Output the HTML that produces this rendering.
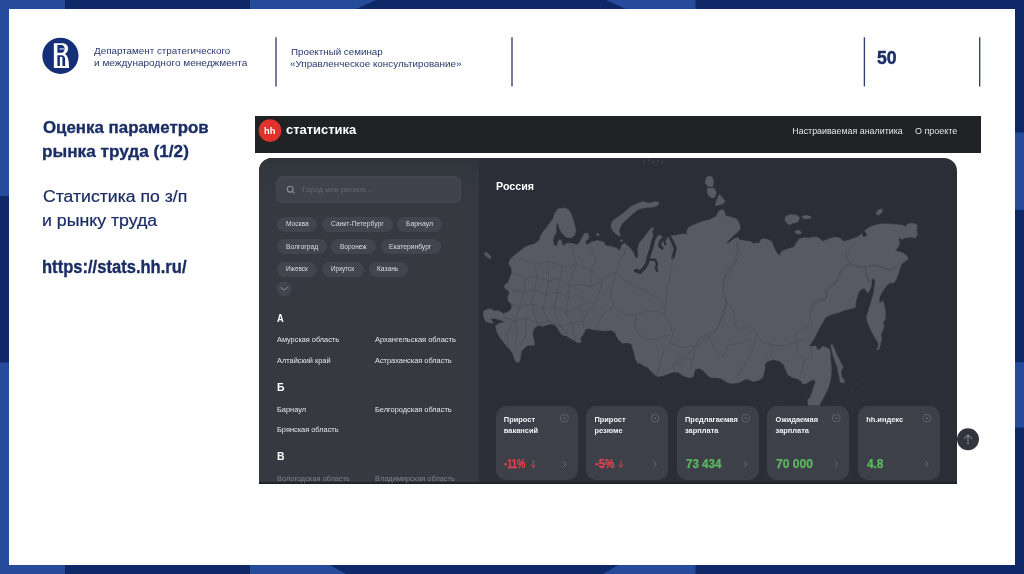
<!DOCTYPE html>
<html lang="ru">
<head>
<meta charset="utf-8">
<title>Оценка параметров рынка труда</title>
<style>
html,body{margin:0;padding:0;}
body{width:1024px;height:574px;position:relative;overflow:hidden;background:#0f2968;font-family:"Liberation Sans",sans-serif;}
#bg,#gfx{position:absolute;left:0;top:0;width:1024px;height:574px;}
#sheet{position:absolute;left:9px;top:8.5px;width:1006px;height:556.5px;background:#ffffff;}
#nav{position:absolute;left:254.7px;top:116px;width:726px;height:36.6px;background:#202226;}
#panel{position:absolute;left:258.5px;top:158.2px;width:698.3px;height:325.4px;background:#2b2e36;border-radius:13px 13px 0 0;overflow:hidden;}
#side{position:absolute;left:0;top:0;width:220.4px;height:100%;background:linear-gradient(180deg,#30343b 0px,#33373e 18px,#363940 50px,#363940 100%);}
#search{position:absolute;left:276.4px;top:175.8px;width:184.2px;height:27.2px;border-radius:7px;background:#40434b;box-shadow:inset 0 0 0 0.7px #494c54;}
.chip{position:absolute;height:15px;border-radius:7.5px;background:#42454d;}
.card{position:absolute;top:405.5px;width:82px;height:74.5px;border-radius:10px;background:#3d4049;}
.t{position:absolute;white-space:nowrap;line-height:1;transform-origin:0 50%;letter-spacing:0;}
</style>
</head>
<body>
<svg id="bg" viewBox="0 0 1024 574">
  <rect width="1024" height="574" fill="#0f2968"/>
  <g fill="#274b9b">
    <rect x="0" y="0" width="65" height="196"/>
    <rect x="0" y="362.5" width="65" height="212"/>
    <polygon points="250,0 376,0 356,9 250,9"/>
    <polygon points="606,0 695.5,0 695.5,9 626,9"/>
    <polygon points="250,564 328,564 346,574 250,574"/>
    <polygon points="620,564 695.5,564 695.5,574 603,574"/>
    <rect x="1000" y="132.6" width="24" height="77.2"/>
    <rect x="1000" y="362.2" width="24" height="65.3"/>
  </g>
</svg>
<div id="sheet"></div>
<div id="nav"></div>
<div id="panel"><div id="side"></div><div style="position:absolute;left:0;bottom:0;width:100%;height:1.3px;background:#22242a"></div></div>
<div id="search"></div>
<div class="chip" style="left:276.9px;top:216.8px;width:40.4px"></div><div class="chip" style="left:322.0px;top:216.8px;width:70.7px"></div><div class="chip" style="left:397.0px;top:216.8px;width:44.5px"></div><div class="chip" style="left:276.9px;top:239.3px;width:49.7px"></div><div class="chip" style="left:331.0px;top:239.3px;width:44.6px"></div><div class="chip" style="left:380.6px;top:239.3px;width:60.4px"></div><div class="chip" style="left:276.9px;top:261.6px;width:40.4px"></div><div class="chip" style="left:322.0px;top:261.6px;width:41.6px"></div><div class="chip" style="left:368.6px;top:261.6px;width:39.2px"></div>
<div class="card" style="left:495.5px"></div><div class="card" style="left:586.1px"></div><div class="card" style="left:676.7px"></div><div class="card" style="left:767.3px"></div><div class="card" style="left:857.9px"></div>
<svg id="gfx" viewBox="0 0 1024 574">
  <defs>
    <clipPath id="landclip"><path d="M511.9,307.7 L511.2,304.0 L508.7,301.4 L507.5,297.7 L509.4,293.9 L508.7,290.8 L505.0,288.3 L504.3,285.8 L508.1,282.6 L510.0,277.6 L511.9,272.6 L511.2,267.6 L508.7,263.8 L510.6,258.8 L513.1,256.5 L519.4,251.5 L524.4,247.7 L528.2,245.8 L534.5,244.0 L539.5,240.2 L540.7,235.2 L544.5,230.2 L547.6,226.4 L550.8,221.4 L553.3,218.2 L555.2,212.6 L558.3,208.8 L564.6,207.9 L569.0,210.1 L571.5,215.1 L574.0,222.6 L575.9,230.2 L574.6,235.2 L570.8,237.9 L565.8,237.1 L562.1,233.3 L559.6,228.9 L558.1,223.2 L556.8,222.9 L556.0,227.6 L556.3,232.7 L554.0,236.2 L552.8,240.2 L554.0,245.5 L557.0,246.1 L557.9,241.7 L559.6,239.7 L561.4,240.4 L562.3,244.8 L564.6,245.7 L565.8,243.7 L569.6,243.2 L573.4,243.7 L577.1,245.0 L579.1,243.5 L580.9,240.2 L582.8,236.4 L584.6,233.3 L587.8,233.3 L589.0,237.1 L587.4,239.7 L585.5,240.9 L585.5,244.2 L588.0,244.5 L590.9,242.2 L597.2,240.6 L603.8,242.0 L605.7,245.7 L611.3,246.4 L617.0,248.2 L618.2,250.8 L620.7,248.9 L622.0,245.1 L624.5,243.2 L627.6,245.7 L630.8,248.9 L633.3,252.6 L635.2,257.7 L637.7,258.3 L638.3,253.9 L637.7,248.9 L639.6,242.6 L644.0,237.6 L647.7,232.6 L650.2,229.4 L651.5,227.5 L654.0,228.8 L654.7,231.9 L655.2,235.7 L656.8,238.2 L658.4,235.1 L662.1,236.6 L665.3,238.2 L668.4,237.6 L671.6,235.7 L677.8,235.1 L684.1,233.8 L687.2,235.1 L686.6,231.3 L689.1,226.9 L696.6,223.8 L702.9,221.3 L709.2,220.0 L716.3,216.3 L718.8,211.3 L722.6,209.4 L725.1,212.5 L725.1,215.7 L730.1,216.9 L736.4,218.8 L739.5,223.8 L740.2,228.2 L738.3,231.4 L735.1,233.9 L731.4,237.6 L725.1,243.9 L728.9,242.7 L733.9,238.9 L737.6,237.6 L740.2,240.2 L743.9,240.8 L750.2,241.4 L752.7,243.3 L759.0,243.3 L761.5,238.9 L766.5,238.9 L771.5,241.4 L774.0,247.7 L776.5,252.7 L779.7,255.8 L781.6,251.4 L787.8,248.9 L794.1,247.1 L796.6,242.7 L799.1,238.9 L804.1,237.6 L809.2,238.3 L812.9,237.0 L817.9,237.6 L823.0,241.4 L828.8,238.9 L835.1,237.1 L840.1,238.3 L843.9,241.4 L848.9,240.2 L853.9,238.3 L858.9,236.4 L861.4,233.3 L862.7,236.4 L865.8,237.1 L867.1,234.5 L864.6,230.8 L869.0,227.6 L875.2,225.1 L881.5,223.9 L887.8,223.9 L895.3,224.5 L901.6,225.1 L905.4,226.4 L907.9,223.9 L912.9,223.2 L917.3,225.1 L916.6,230.2 L917.3,235.2 L915.4,237.7 L910.4,237.1 L905.4,237.7 L901.6,239.6 L899.7,237.1 L898.5,239.6 L899.7,242.7 L897.8,247.7 L895.3,250.2 L897.8,251.5 L902.8,252.7 L907.2,256.5 L907.2,260.3 L907.9,257.5 L905.4,261.3 L901.6,263.8 L899.7,268.8 L897.8,275.1 L895.9,280.1 L893.4,283.2 L890.3,282.6 L887.2,285.1 L884.0,288.9 L881.5,292.7 L879.6,296.4 L879.0,301.4 L880.9,303.3 L882.8,300.2 L884.0,305.2 L885.3,310.2 L885.3,315.2 L885.4,318.8 L882.9,322.5 L884.1,326.3 L882.9,330.1 L881.0,333.8 L881.6,338.9 L880.4,343.9 L879.1,348.9 L876.6,350.2 L877.9,347.6 L878.5,343.9 L876.6,340.1 L873.5,335.1 L870.3,328.8 L867.8,322.5 L866.6,317.5 L867.1,315.2 L869.0,309.0 L870.9,302.7 L872.7,296.4 L874.0,291.4 L874.6,286.4 L875.2,281.4 L874.0,278.2 L872.1,278.6 L871.5,281.4 L871.5,285.1 L870.2,288.9 L868.3,292.7 L866.5,291.4 L865.2,288.9 L862.7,288.3 L858.9,291.4 L857.1,296.4 L855.8,301.4 L855.2,305.2 L856.4,306.5 L852.7,308.3 L847.6,309.6 L843.9,310.2 L840.1,312.1 L830.2,315.0 L825.2,317.5 L822.7,322.5 L818.9,328.8 L816.4,333.8 L813.9,338.9 L811.4,342.6 L809.5,346.4 L812.6,346.4 L815.8,345.8 L817.6,350.2 L820.2,348.9 L822.7,346.4 L826.4,347.6 L829.6,349.5 L830.2,352.7 L830.3,357.6 L831.0,363.8 L831.3,370.1 L831.0,376.4 L829.7,382.7 L827.8,388.9 L825.3,394.0 L822.8,399.0 L820.3,402.7 L819.0,407.8 L808.4,407.8 L807.8,399.6 L810.3,397.7 L812.1,392.7 L813.4,387.7 L815.3,382.7 L814.7,379.5 L811.5,380.2 L806.5,383.3 L802.7,383.9 L801.5,381.4 L797.7,378.9 L792.7,377.6 L788.3,375.1 L785.8,370.1 L783.9,365.1 L780.2,361.3 L773.9,359.4 L767.6,361.3 L764.5,364.5 L765.1,367.6 L763.8,372.6 L762.6,377.6 L758.8,380.2 L752.5,381.4 L747.9,379.0 L744.2,379.6 L741.7,381.5 L737.9,382.7 L732.9,383.4 L727.9,382.7 L724.1,380.2 L720.3,378.3 L716.6,377.7 L711.6,377.7 L707.8,375.8 L705.3,372.7 L702.1,369.6 L698.4,368.3 L695.2,369.6 L694.0,372.7 L693.4,376.5 L690.2,377.7 L685.2,376.5 L681.4,374.6 L677.7,372.1 L672.7,372.1 L667.6,374.0 L662.6,375.8 L657.6,376.5 L653.8,374.0 L650.1,370.2 L647.6,367.1 L643.8,365.8 L640.0,363.3 L637.5,362.7 L635.6,358.9 L633.8,351.4 L631.9,345.1 L631.6,344.0 L627.9,342.7 L622.8,343.3 L619.1,340.2 L616.6,336.4 L615.3,332.7 L611.6,330.2 L605.3,330.8 L599.0,330.2 L592.7,329.5 L587.7,328.3 L585.2,330.2 L584.0,333.3 L581.4,336.4 L580.2,339.6 L581.4,342.1 L577.7,342.7 L573.9,340.2 L570.2,338.3 L566.4,335.8 L562.6,335.2 L560.1,332.7 L557.6,328.3 L555.1,325.1 L551.3,323.9 L546.3,325.1 L542.5,326.4 L538.8,325.1 L535.0,327.6 L533.1,330.2 L532.5,335.2 L533.8,340.2 L534.4,345.2 L528.2,345.2 L524.4,347.7 L521.3,351.4 L520.7,356.5 L519.4,361.5 L516.9,362.7 L514.4,359.0 L513.1,354.0 L510.6,350.2 L506.9,346.4 L503.1,341.4 L499.3,336.4 L496.8,331.4 L495.6,326.3 L498.1,323.8 L503.1,322.6 L505.6,322.0 L500.6,320.1 L494.3,318.2 L490.5,318.8 L493.1,323.2 L489.3,322.6 L485.5,321.3 L483.6,316.3 L483.6,311.3 L486.8,309.4 L490.5,308.8 L494.3,311.3 L498.1,310.7 L501.8,312.5 L503.1,313.8 L506.9,312.5 L510.6,310.0 L511.9,307.5Z"/></clipPath>
    <clipPath id="mapclip"><rect x="479" y="158.2" width="478.8" height="247.3"/></clipPath>
  </defs>
  <!-- header rules -->
  <g stroke="#303e72" stroke-width="1.35">
    <line x1="276" y1="37.3" x2="276" y2="86.4"/>
    <line x1="512" y1="37.3" x2="512" y2="86.4"/>
    <line x1="864.4" y1="37.3" x2="864.4" y2="86.4"/>
    <line x1="979.7" y1="37.3" x2="979.7" y2="86.4"/>
  </g>
  <!-- HSE logo -->
  <circle cx="60.4" cy="55.8" r="18.1" fill="#152f78"/>
  <g id="hse">
    <path d="M53.85,43.3 L62.5,43.3 C66.2,43.3 68.0,45.6 68.0,48.4 C68.0,50.9 66.8,52.8 65.0,53.8 C67.2,55.2 68.3,58.5 68.7,62 L69.1,68 L53.85,68 Z" fill="#ffffff"/>
    <path d="M57.4,44.9 L61.3,44.9 C63.6,44.9 64.6,46.8 64.6,48.8 C64.6,50.9 63.6,52.75 61.3,52.75 L57.4,52.75 Z" fill="#152f78"/>
    <rect x="59.4" y="48.25" width="5.0" height="1.35" fill="#b7c6ef"/>
    <path d="M57.4,65.9 L57.4,55.3 L61.5,55.3 C64,55.3 65.1,57 65.1,59.2 L65.1,65.9 Z" fill="#152f78"/>
    <rect x="59.9" y="56.9" width="2.5" height="9.2" fill="#ffffff"/>
  </g>
  <!-- hh logo -->
  <circle cx="270" cy="130.6" r="11.3" fill="#e1312b"/>
  <!-- search icon -->
  <g fill="none" stroke="#8a8d95" stroke-width="1.1" stroke-linecap="round">
    <circle cx="290.2" cy="189.2" r="2.9"/>
    <line x1="292.4" y1="191.4" x2="294.2" y2="193.2"/>
  </g>
  <!-- more chips button -->
  <circle cx="284.2" cy="288.7" r="7.5" fill="#42454d"/>
  <path d="M280.8,287.5 L284.2,290.0 L287.6,287.3" fill="none" stroke="#858991" stroke-width="0.95" stroke-linecap="round" stroke-linejoin="round"/>
  <!-- map -->
  <g clip-path="url(#mapclip)">
<path d="M511.9,307.7 L511.2,304.0 L508.7,301.4 L507.5,297.7 L509.4,293.9 L508.7,290.8 L505.0,288.3 L504.3,285.8 L508.1,282.6 L510.0,277.6 L511.9,272.6 L511.2,267.6 L508.7,263.8 L510.6,258.8 L513.1,256.5 L519.4,251.5 L524.4,247.7 L528.2,245.8 L534.5,244.0 L539.5,240.2 L540.7,235.2 L544.5,230.2 L547.6,226.4 L550.8,221.4 L553.3,218.2 L555.2,212.6 L558.3,208.8 L564.6,207.9 L569.0,210.1 L571.5,215.1 L574.0,222.6 L575.9,230.2 L574.6,235.2 L570.8,237.9 L565.8,237.1 L562.1,233.3 L559.6,228.9 L558.1,223.2 L556.8,222.9 L556.0,227.6 L556.3,232.7 L554.0,236.2 L552.8,240.2 L554.0,245.5 L557.0,246.1 L557.9,241.7 L559.6,239.7 L561.4,240.4 L562.3,244.8 L564.6,245.7 L565.8,243.7 L569.6,243.2 L573.4,243.7 L577.1,245.0 L579.1,243.5 L580.9,240.2 L582.8,236.4 L584.6,233.3 L587.8,233.3 L589.0,237.1 L587.4,239.7 L585.5,240.9 L585.5,244.2 L588.0,244.5 L590.9,242.2 L597.2,240.6 L603.8,242.0 L605.7,245.7 L611.3,246.4 L617.0,248.2 L618.2,250.8 L620.7,248.9 L622.0,245.1 L624.5,243.2 L627.6,245.7 L630.8,248.9 L633.3,252.6 L635.2,257.7 L637.7,258.3 L638.3,253.9 L637.7,248.9 L639.6,242.6 L644.0,237.6 L647.7,232.6 L650.2,229.4 L651.5,227.5 L654.0,228.8 L654.7,231.9 L655.2,235.7 L656.8,238.2 L658.4,235.1 L662.1,236.6 L665.3,238.2 L668.4,237.6 L671.6,235.7 L677.8,235.1 L684.1,233.8 L687.2,235.1 L686.6,231.3 L689.1,226.9 L696.6,223.8 L702.9,221.3 L709.2,220.0 L716.3,216.3 L718.8,211.3 L722.6,209.4 L725.1,212.5 L725.1,215.7 L730.1,216.9 L736.4,218.8 L739.5,223.8 L740.2,228.2 L738.3,231.4 L735.1,233.9 L731.4,237.6 L725.1,243.9 L728.9,242.7 L733.9,238.9 L737.6,237.6 L740.2,240.2 L743.9,240.8 L750.2,241.4 L752.7,243.3 L759.0,243.3 L761.5,238.9 L766.5,238.9 L771.5,241.4 L774.0,247.7 L776.5,252.7 L779.7,255.8 L781.6,251.4 L787.8,248.9 L794.1,247.1 L796.6,242.7 L799.1,238.9 L804.1,237.6 L809.2,238.3 L812.9,237.0 L817.9,237.6 L823.0,241.4 L828.8,238.9 L835.1,237.1 L840.1,238.3 L843.9,241.4 L848.9,240.2 L853.9,238.3 L858.9,236.4 L861.4,233.3 L862.7,236.4 L865.8,237.1 L867.1,234.5 L864.6,230.8 L869.0,227.6 L875.2,225.1 L881.5,223.9 L887.8,223.9 L895.3,224.5 L901.6,225.1 L905.4,226.4 L907.9,223.9 L912.9,223.2 L917.3,225.1 L916.6,230.2 L917.3,235.2 L915.4,237.7 L910.4,237.1 L905.4,237.7 L901.6,239.6 L899.7,237.1 L898.5,239.6 L899.7,242.7 L897.8,247.7 L895.3,250.2 L897.8,251.5 L902.8,252.7 L907.2,256.5 L907.2,260.3 L907.9,257.5 L905.4,261.3 L901.6,263.8 L899.7,268.8 L897.8,275.1 L895.9,280.1 L893.4,283.2 L890.3,282.6 L887.2,285.1 L884.0,288.9 L881.5,292.7 L879.6,296.4 L879.0,301.4 L880.9,303.3 L882.8,300.2 L884.0,305.2 L885.3,310.2 L885.3,315.2 L885.4,318.8 L882.9,322.5 L884.1,326.3 L882.9,330.1 L881.0,333.8 L881.6,338.9 L880.4,343.9 L879.1,348.9 L876.6,350.2 L877.9,347.6 L878.5,343.9 L876.6,340.1 L873.5,335.1 L870.3,328.8 L867.8,322.5 L866.6,317.5 L867.1,315.2 L869.0,309.0 L870.9,302.7 L872.7,296.4 L874.0,291.4 L874.6,286.4 L875.2,281.4 L874.0,278.2 L872.1,278.6 L871.5,281.4 L871.5,285.1 L870.2,288.9 L868.3,292.7 L866.5,291.4 L865.2,288.9 L862.7,288.3 L858.9,291.4 L857.1,296.4 L855.8,301.4 L855.2,305.2 L856.4,306.5 L852.7,308.3 L847.6,309.6 L843.9,310.2 L840.1,312.1 L830.2,315.0 L825.2,317.5 L822.7,322.5 L818.9,328.8 L816.4,333.8 L813.9,338.9 L811.4,342.6 L809.5,346.4 L812.6,346.4 L815.8,345.8 L817.6,350.2 L820.2,348.9 L822.7,346.4 L826.4,347.6 L829.6,349.5 L830.2,352.7 L830.3,357.6 L831.0,363.8 L831.3,370.1 L831.0,376.4 L829.7,382.7 L827.8,388.9 L825.3,394.0 L822.8,399.0 L820.3,402.7 L819.0,407.8 L808.4,407.8 L807.8,399.6 L810.3,397.7 L812.1,392.7 L813.4,387.7 L815.3,382.7 L814.7,379.5 L811.5,380.2 L806.5,383.3 L802.7,383.9 L801.5,381.4 L797.7,378.9 L792.7,377.6 L788.3,375.1 L785.8,370.1 L783.9,365.1 L780.2,361.3 L773.9,359.4 L767.6,361.3 L764.5,364.5 L765.1,367.6 L763.8,372.6 L762.6,377.6 L758.8,380.2 L752.5,381.4 L747.9,379.0 L744.2,379.6 L741.7,381.5 L737.9,382.7 L732.9,383.4 L727.9,382.7 L724.1,380.2 L720.3,378.3 L716.6,377.7 L711.6,377.7 L707.8,375.8 L705.3,372.7 L702.1,369.6 L698.4,368.3 L695.2,369.6 L694.0,372.7 L693.4,376.5 L690.2,377.7 L685.2,376.5 L681.4,374.6 L677.7,372.1 L672.7,372.1 L667.6,374.0 L662.6,375.8 L657.6,376.5 L653.8,374.0 L650.1,370.2 L647.6,367.1 L643.8,365.8 L640.0,363.3 L637.5,362.7 L635.6,358.9 L633.8,351.4 L631.9,345.1 L631.6,344.0 L627.9,342.7 L622.8,343.3 L619.1,340.2 L616.6,336.4 L615.3,332.7 L611.6,330.2 L605.3,330.8 L599.0,330.2 L592.7,329.5 L587.7,328.3 L585.2,330.2 L584.0,333.3 L581.4,336.4 L580.2,339.6 L581.4,342.1 L577.7,342.7 L573.9,340.2 L570.2,338.3 L566.4,335.8 L562.6,335.2 L560.1,332.7 L557.6,328.3 L555.1,325.1 L551.3,323.9 L546.3,325.1 L542.5,326.4 L538.8,325.1 L535.0,327.6 L533.1,330.2 L532.5,335.2 L533.8,340.2 L534.4,345.2 L528.2,345.2 L524.4,347.7 L521.3,351.4 L520.7,356.5 L519.4,361.5 L516.9,362.7 L514.4,359.0 L513.1,354.0 L510.6,350.2 L506.9,346.4 L503.1,341.4 L499.3,336.4 L496.8,331.4 L495.6,326.3 L498.1,323.8 L503.1,322.6 L505.6,322.0 L500.6,320.1 L494.3,318.2 L490.5,318.8 L493.1,323.2 L489.3,322.6 L485.5,321.3 L483.6,316.3 L483.6,311.3 L486.8,309.4 L490.5,308.8 L494.3,311.3 L498.1,310.7 L501.8,312.5 L503.1,313.8 L506.9,312.5 L510.6,310.0 L511.9,307.5Z" fill="#575a65" stroke="#575a65" stroke-width="0.6" stroke-linejoin="round"/>
<path d="M484.0,253.4 L485.8,252.1 L488.7,254.0 L491.2,257.1 L490.5,258.8 L488.0,257.8 L485.3,255.5Z" fill="#575a65" stroke="#575a65" stroke-width="0.4" stroke-linejoin="round"/>
<path d="M611.3,224.0 L613.2,220.2 L618.9,216.4 L623.9,212.7 L630.2,207.0 L636.4,203.9 L642.7,201.4 L649.0,203.2 L655.2,201.4 L658.8,202.0 L658.4,205.1 L654.0,207.0 L646.5,207.6 L638.9,208.9 L633.3,213.3 L627.4,218.7 L622.9,222.7 L620.1,227.1 L619.1,231.5 L620.7,236.2 L617.4,235.0 L612.8,230.9 L610.8,226.7Z" fill="#575a65" stroke="#575a65" stroke-width="0.4" stroke-linejoin="round"/>
<path d="M708.2,176.2 L712.0,176.8 L713.8,181.8 L712.6,186.9 L707.6,186.2 L705.1,183.1 L706.3,178.1Z" fill="#575a65" stroke="#575a65" stroke-width="0.4" stroke-linejoin="round"/>
<path d="M707.6,188.1 L713.8,188.1 L716.3,191.9 L715.1,196.9 L712.0,198.2 L708.2,195.0 L706.9,190.6Z" fill="#575a65" stroke="#575a65" stroke-width="0.4" stroke-linejoin="round"/>
<path d="M719.5,194.4 L725.1,200.7 L723.2,203.8 L715.1,205.7 L717.0,199.4Z" fill="#575a65" stroke="#575a65" stroke-width="0.4" stroke-linejoin="round"/>
<path d="M785.9,216.3 L790.3,214.4 L796.6,215.1 L799.7,217.6 L797.9,222.0 L792.8,223.2 L789.1,225.1 L785.9,222.0 L784.7,218.8Z" fill="#575a65" stroke="#575a65" stroke-width="0.4" stroke-linejoin="round"/>
<path d="M802.3,216.1 L806.6,215.3 L811.0,216.6 L810.4,218.6 L806.0,219.1 L802.6,218.2Z" fill="#575a65" stroke="#575a65" stroke-width="0.4" stroke-linejoin="round"/>
<path d="M794.7,231.4 L797.9,229.9 L801.6,232.0 L800.4,233.9 L796.6,234.1Z" fill="#575a65" stroke="#575a65" stroke-width="0.4" stroke-linejoin="round"/>
<path d="M876.2,214.5 L877.1,211.3 L880.3,208.8 L882.8,209.4 L882.1,212.3 L879.0,215.1Z" fill="#575a65" stroke="#575a65" stroke-width="0.4" stroke-linejoin="round"/>
<path d="M831.7,344.1 L834.0,347.6 L835.8,352.7 L839.0,358.9 L841.5,364.0 L843.4,367.1 L842.1,369.0 L840.9,372.7 L842.1,377.8 L844.6,380.3 L844.2,382.8 L840.2,382.8 L839.6,377.8 L838.3,372.7 L837.1,366.5 L835.2,361.4 L833.3,356.4 L832.1,351.4 L830.9,346.4Z" fill="#575a65" stroke="#575a65" stroke-width="0.4" stroke-linejoin="round"/>
<circle cx="597.8" cy="234.5" r="1.6" fill="#575a65"/>
<circle cx="621.4" cy="240.7" r="1.2" fill="#575a65"/>
<circle cx="652.4" cy="229.8" r="1.3" fill="#575a65"/>
<circle cx="644" cy="161.5" r="1.1" fill="#575a65" opacity="0.55"/>
<circle cx="648.5" cy="160.2" r="1.0" fill="#575a65" opacity="0.55"/>
<circle cx="653" cy="162.3" r="1.2" fill="#575a65" opacity="0.55"/>
<circle cx="658" cy="160.8" r="1.0" fill="#575a65" opacity="0.55"/>
<circle cx="662.5" cy="162.0" r="1.0" fill="#575a65" opacity="0.55"/>
<circle cx="656" cy="165.5" r="0.8" fill="#575a65" opacity="0.55"/>
<circle cx="868.5" cy="372" r="0.7" fill="#575a65" opacity="0.55"/>
<circle cx="864" cy="378" r="0.7" fill="#575a65" opacity="0.55"/>
<circle cx="858" cy="384" r="0.7" fill="#575a65" opacity="0.55"/>
<circle cx="852" cy="390" r="0.6" fill="#575a65" opacity="0.55"/>
<path d="M654.2,231.1 L655.0,236.3 L653.4,240.1 L652.1,245.1 L650.9,250.1 L649.0,255.2 L648.0,258.9 L647.1,263.3 L644.0,268.3 L640.2,272.1 L635.8,270.5" fill="none" stroke="#2b2e36" stroke-width="3.5" stroke-linecap="round" stroke-linejoin="round"/>
<path d="M648.3,259.5 L655.2,259.9 L657.1,263.9 L655.9,267.7 L657.1,270.8" fill="none" stroke="#2b2e36" stroke-width="2.3" stroke-linecap="round" stroke-linejoin="round"/>
<path d="M663.4,238.2 L660.3,242.0 L659.6,245.7 L662.1,248.2" fill="none" stroke="#2b2e36" stroke-width="3.0" stroke-linecap="round" stroke-linejoin="round"/>
<path d="M665.9,238.2 L664.3,241.6 L665.5,244.5" fill="none" stroke="#2b2e36" stroke-width="2.0" stroke-linecap="round" stroke-linejoin="round"/>
<path d="M670.3,237.6 L672.8,242.6 L675.3,248.2 L674.3,252.6 L672.8,257.7" fill="none" stroke="#2b2e36" stroke-width="3.0" stroke-linecap="round" stroke-linejoin="round"/>
<g fill="none" stroke="#494c57" stroke-width="0.7" stroke-linejoin="round" clip-path="url(#landclip)"><path d="M736.4,237.6 L737.6,250.2 L733.9,260.2 L728.9,267.8 L725.1,275.3 L722.6,287.8"/><path d="M846.4,250.0 L845.1,256.3 L851.4,263.8 L857.7,267.6 L865.2,266.9 L872.7,265.1 L880.3,266.3 L887.8,270.1 L896.6,266.3"/><path d="M851.4,263.8 L842.6,267.6 L840.1,275.1 L838.9,280.1 L830.1,285.1 L825.1,290.2 L826.3,297.7 L817.5,300.2 L812.5,302.7 L810.0,312.7"/><path d="M865.2,266.9 L866.5,275.1 L869.0,281.4 L871.5,279.1"/><path d="M616.3,272.6 L624.8,281.1 L636.1,286.7 L647.4,292.3 L658.7,299.4 L665.7,305.1 L664.3,314.9 L670.0,323.4 L672.8,334.7 L670.0,343.2 L664.3,348.8 L661.5,357.3 L658.7,368.6 L657.3,375.6"/><path d="M670.0,244.4 L672.8,261.3 L670.0,275.4 L667.2,289.5 L665.7,305.1"/><path d="M568.3,286.7 L579.6,283.9 L590.9,286.7 L602.2,281.1 L610.7,274.0 L616.3,272.6 L619.2,261.3 L624.8,252.8 L627.6,241.5"/><path d="M602.2,281.1 L599.4,292.3 L593.8,303.6 L588.1,312.1 L582.5,320.6 L585.3,331.9"/><path d="M636.1,314.9 L647.4,310.7 L658.7,312.1 L664.3,314.9"/><path d="M636.1,314.9 L634.7,326.2 L638.9,334.7 L647.4,340.3 L658.7,337.5 L670.0,334.7"/><path d="M723.6,292.3 L726.4,303.6 L723.6,314.9 L718.0,326.2 L712.3,334.7 L703.9,340.3 L695.4,348.8 L692.6,360.1 L689.7,371.4"/><path d="M670.0,343.2 L681.3,347.4 L692.6,346.0 L695.4,348.8"/><path d="M672.8,365.8 L681.3,357.3 L692.6,360.1"/><path d="M616.3,272.6 L610.7,292.3 L613.5,306.5 L624.8,314.9 L636.1,314.9"/><path d="M613.5,306.5 L602.2,314.9 L596.6,326.2 L602.2,334.7"/><path d="M520.3,258.5 L534.5,264.1 L548.6,261.3 L562.7,266.9 L576.8,264.1 L590.9,269.8 L602.2,281.1"/><path d="M514.7,272.6 L526.0,278.2 L537.3,275.4 L548.6,281.1 L559.9,278.2 L568.3,286.7"/><path d="M511.9,289.5 L523.2,292.3 L534.5,289.5 L545.8,295.2 L557.1,292.3 L568.3,298.0 L576.8,295.2 L588.1,300.8 L593.8,303.6"/><path d="M509.1,303.6 L520.3,306.5 L531.6,303.6 L542.9,309.3 L554.2,306.5 L565.5,312.1 L576.8,309.3 L588.1,312.1"/><path d="M503.4,317.8 L514.7,320.6 L526.0,317.8 L537.3,323.4 L548.6,320.6 L559.9,326.2 L571.2,323.4 L582.5,320.6"/><path d="M534.5,264.1 L537.3,275.4 L534.5,289.5 L531.6,303.6 L537.3,323.4 L534.5,334.7"/><path d="M548.6,261.3 L548.6,281.1 L545.8,295.2 L542.9,309.3 L548.6,320.6"/><path d="M562.7,266.9 L559.9,278.2 L557.1,292.3 L554.2,306.5 L559.9,326.2 L568.3,334.7"/><path d="M576.8,264.1 L568.3,286.7 L568.3,298.0 L565.5,312.1 L571.2,323.4 L575.4,340.3"/><path d="M526.0,278.2 L523.2,292.3 L520.3,306.5 L514.7,320.6 L517.5,334.7 L514.7,346.0"/><path d="M590.9,269.8 L590.9,286.7"/><path d="M588.1,300.8 L576.8,309.3"/><path d="M514.7,320.6 L506.2,334.7 L509.1,348.8"/><path d="M526.0,317.8 L526.0,334.7 L520.3,346.0"/><path d="M571.2,244.4 L574.0,255.6 L576.8,264.1"/><path d="M590.9,269.8 L596.6,258.5 L590.9,247.2"/><path d="M737.9,241.8 L739.3,254.5 L733.6,265.8 L725.2,277.1 L722.3,291.2 L726.6,302.5 L722.3,313.8 L718.1,327.9 L708.2,333.6 L699.8,339.2 L694.1,347.7 L685.6,356.2 L680.0,361.8 L671.5,367.5"/><path d="M726.6,302.5 L733.6,311.0 L735.1,325.1 L742.1,330.8 L750.6,325.1 L756.2,333.6 L761.9,342.0 L773.2,344.9 L784.5,346.3 L795.8,342.0 L804.2,339.2 L809.9,344.9"/><path d="M852.2,246.1 L846.6,257.3 L849.4,264.4 L840.9,270.1 L835.3,282.8 L826.8,291.2 L825.4,299.7 L815.5,302.5 L809.9,313.8 L812.7,325.1 L804.2,327.9 L795.8,333.6 L795.8,342.0"/><path d="M849.4,264.4 L863.5,267.2 L877.6,265.8 L891.7,270.1 L903.0,263.0"/><path d="M864.9,267.2 L867.7,279.9 L872.5,285.6"/><path d="M756.2,333.6 L753.4,347.7 L747.8,359.0 L742.1,367.5 L736.5,378.7"/><path d="M729.4,344.9 L739.3,343.5 L750.6,339.2"/><path d="M708.2,333.6 L713.9,347.7 L722.3,356.2 L729.4,344.9"/><path d="M773.2,344.9 L770.3,356.2 L764.7,361.8"/><path d="M795.8,342.0 L798.6,353.3 L804.2,359.0 L801.4,373.1"/><path d="M809.9,344.9 L812.7,356.2 L804.2,359.0"/></g>
  </g>
  <!-- card icons -->
  <g id="cardicons"><circle cx="564.5" cy="418.2" r="3.9" fill="none" stroke="#686b74" stroke-width="0.8"/><circle cx="564.5" cy="418.2" r="0.9" fill="#686b74"/><path d="M563.3,461.6 L565.8,464.2 L563.3,466.8" fill="none" stroke="#686b74" stroke-width="1" stroke-linecap="round" stroke-linejoin="round"/><circle cx="655.1" cy="418.2" r="3.9" fill="none" stroke="#686b74" stroke-width="0.8"/><circle cx="655.1" cy="418.2" r="0.9" fill="#686b74"/><path d="M653.9,461.6 L656.4,464.2 L653.9,466.8" fill="none" stroke="#686b74" stroke-width="1" stroke-linecap="round" stroke-linejoin="round"/><circle cx="745.7" cy="418.2" r="3.9" fill="none" stroke="#686b74" stroke-width="0.8"/><circle cx="745.7" cy="418.2" r="0.9" fill="#686b74"/><path d="M744.5,461.6 L747.0,464.2 L744.5,466.8" fill="none" stroke="#686b74" stroke-width="1" stroke-linecap="round" stroke-linejoin="round"/><circle cx="836.3" cy="418.2" r="3.9" fill="none" stroke="#686b74" stroke-width="0.8"/><circle cx="836.3" cy="418.2" r="0.9" fill="#686b74"/><path d="M835.1,461.6 L837.6,464.2 L835.1,466.8" fill="none" stroke="#686b74" stroke-width="1" stroke-linecap="round" stroke-linejoin="round"/><circle cx="926.9" cy="418.2" r="3.9" fill="none" stroke="#686b74" stroke-width="0.8"/><circle cx="926.9" cy="418.2" r="0.9" fill="#686b74"/><path d="M925.7,461.6 L928.2,464.2 L925.7,466.8" fill="none" stroke="#686b74" stroke-width="1" stroke-linecap="round" stroke-linejoin="round"/><path d="M533.3,460.6 L533.3,467.2 M531.1999999999999,465.0 L533.3,467.3 L535.4,465.0" fill="none" stroke="#c94652" stroke-width="1" stroke-linecap="round" stroke-linejoin="round"/><path d="M620.9,460.6 L620.9,467.2 M618.8,465.0 L620.9,467.3 L623.0,465.0" fill="none" stroke="#c94652" stroke-width="1" stroke-linecap="round" stroke-linejoin="round"/></g>
  <!-- scroll-up -->
  <circle cx="968" cy="439.3" r="11" fill="#31343c"/>
  <path d="M968,444 L968,435 M964.3,438.6 L968,434.9 L971.7,438.6" fill="none" stroke="#7d8089" stroke-width="1.1" stroke-linecap="round" stroke-linejoin="round"/>
</svg>
<div id="txt" style="position:absolute;left:0;top:0;width:1024px;height:574px;will-change:transform;">
<span class="t" style="left:94.40px;top:46.73px;font-size:9.3px;font-weight:400;color:#28386f;transform:scaleX(1.0580);">Департамент стратегического</span>
<span class="t" style="left:94.40px;top:59.23px;font-size:9.3px;font-weight:400;color:#28386f;transform:scaleX(1.0806);">и международного менеджмента</span>
<span class="t" style="left:290.50px;top:47.73px;font-size:9.3px;font-weight:400;color:#28386f;transform:scaleX(1.0526);">Проектный семинар</span>
<span class="t" style="left:290.00px;top:60.23px;font-size:9.3px;font-weight:400;color:#28386f;transform:scaleX(1.0597);">«Управленческое консультирование»</span>
<span class="t" style="left:877.40px;top:47.52px;font-size:19px;font-weight:700;color:#1b2d66;transform:scaleX(0.9287);-webkit-text-stroke:0.45px #1b2d66;">50</span>
<span class="t" style="left:42.70px;top:120.13px;font-size:15.8px;font-weight:700;color:#1b2d66;transform:scaleX(1.0678);-webkit-text-stroke:0.3px #1b2d66;">Оценка параметров</span>
<span class="t" style="left:41.61px;top:143.73px;font-size:15.8px;font-weight:700;color:#1b2d66;transform:scaleX(1.0878);-webkit-text-stroke:0.3px #1b2d66;">рынка труда (1/2)</span>
<span class="t" style="left:42.70px;top:189.23px;font-size:15.8px;font-weight:400;color:#1b2d66;transform:scaleX(1.1157);-webkit-text-stroke:0.22px #1b2d66;">Статистика по з/п</span>
<span class="t" style="left:41.58px;top:212.63px;font-size:15.8px;font-weight:400;color:#1b2d66;transform:scaleX(1.1218);-webkit-text-stroke:0.22px #1b2d66;">и рынку труда</span>
<span class="t" style="left:41.78px;top:257.56px;font-size:18px;font-weight:700;color:#1b2d66;transform:scaleX(0.9205);-webkit-text-stroke:0.35px #1b2d66;">https://stats.hh.ru/</span>
<span class="t" style="left:285.60px;top:123.49px;font-size:13.6px;font-weight:700;color:#ffffff;transform:scaleX(0.9532);">статистика</span>
<span class="t" style="left:792.30px;top:126.67px;font-size:8.9px;font-weight:400;color:#e4e5e7;">Настраиваемая аналитика</span>
<span class="t" style="left:915.00px;top:126.67px;font-size:8.9px;font-weight:400;color:#e4e5e7;transform:scaleX(1.0112);">О проекте</span>
<span class="t" style="left:264.40px;top:126.20px;font-size:9.8px;font-weight:700;color:#ffffff;transform:scaleX(0.9512);">hh</span>
<span class="t" style="left:496.00px;top:181.37px;font-size:10.9px;font-weight:700;color:#ffffff;transform:scaleX(0.9841);">Россия</span>
<span class="t" style="left:302.30px;top:185.60px;font-size:7.8px;font-weight:400;color:#656870;">Город или регион...</span>
<span class="t" style="left:285.70px;top:221.36px;font-size:6.9px;font-weight:400;color:#dcdde0;transform:scaleX(0.9623);">Москва</span>
<span class="t" style="left:330.80px;top:221.36px;font-size:6.9px;font-weight:400;color:#dcdde0;transform:scaleX(0.9738);">Санкт-Петербург</span>
<span class="t" style="left:405.80px;top:221.36px;font-size:6.9px;font-weight:400;color:#dcdde0;transform:scaleX(0.9948);">Барнаул</span>
<span class="t" style="left:285.70px;top:243.86px;font-size:6.9px;font-weight:400;color:#dcdde0;transform:scaleX(0.9826);">Волгоград</span>
<span class="t" style="left:339.80px;top:243.86px;font-size:6.9px;font-weight:400;color:#dcdde0;transform:scaleX(0.9423);">Воронеж</span>
<span class="t" style="left:389.40px;top:243.86px;font-size:6.9px;font-weight:400;color:#dcdde0;transform:scaleX(0.9764);">Екатеринбург</span>
<span class="t" style="left:285.70px;top:266.16px;font-size:6.9px;font-weight:400;color:#dcdde0;transform:scaleX(0.9336);">Ижевск</span>
<span class="t" style="left:330.80px;top:266.16px;font-size:6.9px;font-weight:400;color:#dcdde0;transform:scaleX(0.9286);">Иркутск</span>
<span class="t" style="left:377.40px;top:266.16px;font-size:6.9px;font-weight:400;color:#dcdde0;transform:scaleX(0.9572);">Казань</span>
<span class="t" style="left:277.00px;top:311.58px;font-size:11.6px;font-weight:700;color:#fff;transform:scaleX(0.8000);">А</span>
<span class="t" style="left:277.00px;top:336.44px;font-size:7.4px;font-weight:400;color:#e6e7ea;transform:scaleX(0.9938);">Амурская область</span>
<span class="t" style="left:375.00px;top:336.44px;font-size:7.4px;font-weight:400;color:#e6e7ea;transform:scaleX(1.0113);">Архангельская область</span>
<span class="t" style="left:277.00px;top:356.64px;font-size:7.4px;font-weight:400;color:#e6e7ea;">Алтайский край</span>
<span class="t" style="left:375.00px;top:356.64px;font-size:7.4px;font-weight:400;color:#e6e7ea;">Астраханская область</span>
<span class="t" style="left:277.00px;top:381.08px;font-size:11.6px;font-weight:700;color:#fff;transform:scaleX(0.9000);">Б</span>
<span class="t" style="left:277.00px;top:405.74px;font-size:7.4px;font-weight:400;color:#e6e7ea;">Барнаул</span>
<span class="t" style="left:375.00px;top:405.74px;font-size:7.4px;font-weight:400;color:#e6e7ea;">Белгородская область</span>
<span class="t" style="left:277.00px;top:425.84px;font-size:7.4px;font-weight:400;color:#e6e7ea;">Брянская область</span>
<span class="t" style="left:277.00px;top:450.38px;font-size:11.6px;font-weight:700;color:#fff;transform:scaleX(0.9000);">В</span>
<span class="t" style="left:277.00px;top:474.94px;font-size:7.4px;font-weight:400;color:#7e828b;">Вологодская область</span>
<span class="t" style="left:375.00px;top:474.94px;font-size:7.4px;font-weight:400;color:#7e828b;">Владимирская область</span>
<span class="t" style="left:503.80px;top:415.69px;font-size:7.45px;font-weight:700;color:#f2f3f5;">Прирост</span>
<span class="t" style="left:503.80px;top:426.99px;font-size:7.45px;font-weight:700;color:#f2f3f5;">вакансий</span>
<span class="t" style="left:504.30px;top:458.83px;font-size:11.9px;font-weight:700;color:#e2444f;transform:scaleX(0.7919);-webkit-text-stroke:0.25px #e2444f;">-11%</span>
<span class="t" style="left:594.40px;top:415.69px;font-size:7.45px;font-weight:700;color:#f2f3f5;">Прирост</span>
<span class="t" style="left:594.40px;top:426.99px;font-size:7.45px;font-weight:700;color:#f2f3f5;">резюме</span>
<span class="t" style="left:594.90px;top:458.83px;font-size:11.9px;font-weight:700;color:#e2444f;transform:scaleX(0.9178);-webkit-text-stroke:0.25px #e2444f;">-5%</span>
<span class="t" style="left:685.00px;top:415.69px;font-size:7.45px;font-weight:700;color:#f2f3f5;">Предлагаемая</span>
<span class="t" style="left:685.00px;top:426.99px;font-size:7.45px;font-weight:700;color:#f2f3f5;">зарплата</span>
<span class="t" style="left:685.50px;top:458.83px;font-size:11.9px;font-weight:700;color:#5cb760;transform:scaleX(0.9740);-webkit-text-stroke:0.25px #5cb760;">73 434</span>
<span class="t" style="left:775.60px;top:415.69px;font-size:7.45px;font-weight:700;color:#f2f3f5;">Ожидаемая</span>
<span class="t" style="left:775.60px;top:426.99px;font-size:7.45px;font-weight:700;color:#f2f3f5;">зарплата</span>
<span class="t" style="left:776.10px;top:458.83px;font-size:11.9px;font-weight:700;color:#5cb760;transform:scaleX(1.0203);-webkit-text-stroke:0.25px #5cb760;">70 000</span>
<span class="t" style="left:866.20px;top:415.69px;font-size:7.45px;font-weight:700;color:#f2f3f5;">hh.индекс</span>
<span class="t" style="left:866.70px;top:458.83px;font-size:11.9px;font-weight:700;color:#5cb760;transform:scaleX(0.9931);-webkit-text-stroke:0.25px #5cb760;">4.8</span>
</div>
</body>
</html>
